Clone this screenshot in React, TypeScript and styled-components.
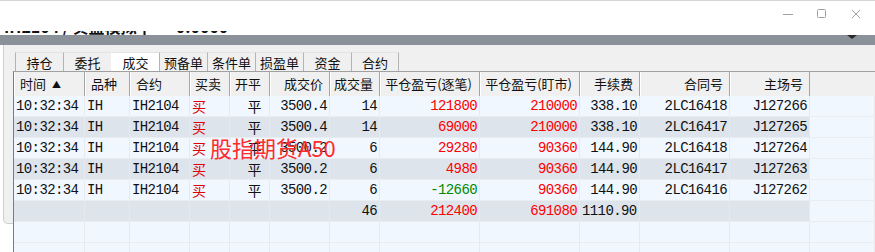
import React from "react";
import styled, { createGlobalStyle } from "styled-components";

const GlobalStyle = createGlobalStyle`
    html, body {
        margin: 0;
        padding: 0;
        background: #ffffff;
        overflow: hidden;
    }
    body {
        font-family: "Noto Sans CJK SC", "Noto Sans", sans-serif;
    }
`;

const Window = styled.div`
    width: 875px;
    height: 252px;
    display: flex;
    flex-direction: column;
    overflow: hidden;
    position: relative;
`;

const TitleBar = styled.div`
    flex-shrink: 0;
    height: 34px;
    border-top: 1px solid #d4d4d4;
    background: #ffffff;
    display: flex;
    flex-direction: column;
`;

const Controls = styled.div`
    height: 30px;
    flex-shrink: 0;
    display: flex;
    justify-content: flex-end;
    align-items: flex-start;
    padding-right: 2px;
`;

const ControlButton = styled.div`
    width: 34px;
    height: 26px;
    display: flex;
    align-items: center;
    justify-content: center;
`;

const ClippedLine = styled.div`
    height: 4px;
    flex-shrink: 0;
    overflow: hidden;
`;

const ClippedText = styled.div`
    margin-top: -14px;
    padding-left: 4px;
    font-size: 16px;
    line-height: 18px;
    color: #111;
    white-space: nowrap;
    font-weight: 700;
`;

const GrayBar = styled.div`
    flex-shrink: 0;
    height: 10px;
    background: #8a9199;
    display: flex;
    justify-content: flex-end;
    padding-right: 18px;
`;

const Body = styled.div`
    flex: 1;
    min-height: 0;
    display: flex;
    overflow: hidden;
`;

const Gutter = styled.div`
    width: 13px;
    background: #ffffff;
    flex-shrink: 0;
`;

const FrameEdge = styled.div`
    margin-left: 3px;
    height: 178px;
    background: #f0f0f0;
    border-left: 1px solid #cfcfcf;
    border-bottom: 1px solid #cfcfcf;
    border-bottom-left-radius: 5px;
`;

const Main = styled.div`
    flex: 1;
    display: flex;
    flex-direction: column;
    background: #f0f0f0;
`;

const TabStrip = styled.div`
    flex-shrink: 0;
    display: flex;
    margin-top: 7px;
    margin-left: 2px;
    height: 19px;
`;

const Tab = styled.div<{ $active?: boolean }>`
    width: 48px;
    height: 19px;
    box-sizing: border-box;
    border-left: 1px solid ${(p) => (p.$active ? "#ffffff" : "#b4b4b4")};
    border-top: 1px solid #e4e4e4;
    background: ${(p) => (p.$active ? "#ffffff" : "#f0f0f0")};
    font-size: 13px;
    line-height: 19px;
    text-align: center;
    color: #111;
    &:last-child {
        border-right: 1px solid #b4b4b4;
    }
`;

const Grid = styled.div`
    flex: 1;
    border-top: 1px solid #a0a0a0;
    border-left: 1px solid #7c7c7c;
    background: #f0f7ff;
    display: flex;
    flex-direction: column;
`;

const cols = "71px 45px 60px 40px 40px 60px 50px 100px 100px 60px 90px 80px 1fr";

const HeaderRow = styled.div`
    flex-shrink: 0;
    display: grid;
    grid-template-columns: ${cols};
    height: 24px;
    background: #f0f0f0;
`;

const HeadCell = styled.div<{ $right?: boolean; $pad: number; $blank?: boolean }>`
    box-sizing: border-box;
    border-right: ${(p) => (p.$blank ? "none" : "1px solid #a5a5a5")};
    box-shadow: ${(p) => (p.$blank ? "none" : "inset 1px 0 0 #ffffff")};
    font-size: 13px;
    line-height: 24px;
    color: #111;
    white-space: nowrap;
    overflow: hidden;
    text-align: ${(p) => (p.$right ? "right" : "left")};
    padding: ${(p) => (p.$right ? `0 ${p.$pad}px 0 0` : `0 0 0 ${p.$pad}px`)};
`;

const SortMark = styled.span`
    font-size: 9px;
    margin-left: 6px;
    position: relative;
    top: -1px;
`;

const DataRow = styled.div`
    flex-shrink: 0;
    display: grid;
    grid-template-columns: ${cols};
    height: 21px;
`;

const Cell = styled.div<{ $dark?: boolean; $align: "left" | "right" | "center"; $color?: string; $cjk?: boolean }>`
    box-sizing: border-box;
    background: ${(p) => (p.$dark ? "#dee4eb" : "#f0f7ff")};
    border-right: 1px solid #e7e9ec;
    border-bottom: 1px solid #e9edf2;
    color: ${(p) => p.$color || "#111"};
    font-family: ${(p) =>
        p.$cjk ? `"Noto Sans CJK SC", sans-serif` : `"Liberation Mono", "Courier New", monospace`};
    font-size: 14px;
    letter-spacing: ${(p) => (p.$cjk ? "0" : "-0.6px")};
    line-height: 21px;
    white-space: nowrap;
    overflow: hidden;
    text-align: ${(p) => p.$align};
    padding: ${(p) =>
        p.$align === "right" ? "0 2px 0 0" : p.$align === "center" ? "0 0 0 10px" : "0 0 0 2px"};
`;

const Watermark = styled.div`
    position: absolute;
    left: 210px;
    top: 132px;
    font-family: "Noto Sans CJK SC", sans-serif;
    font-size: 22px;
    line-height: 30px;
    color: #ff2a2a;
    white-space: nowrap;
    pointer-events: none;
`;

type Align = "left" | "right" | "center";

const headers: { label: string; right?: boolean; pad: number }[] = [
    { label: "时间", pad: 6 },
    { label: "品种", pad: 6 },
    { label: "合约", pad: 6 },
    { label: "买卖", pad: 5 },
    { label: "开平", pad: 5 },
    { label: "成交价", right: true, pad: 6 },
    { label: "成交量", right: true, pad: 6 },
    { label: "平仓盈亏(逐笔)", right: true, pad: 7 },
    { label: "平仓盈亏(盯市)", right: true, pad: 7 },
    { label: "手续费", right: true, pad: 6 },
    { label: "合同号", right: true, pad: 6 },
    { label: "主场号", right: true, pad: 6 },
];

const aligns: Align[] = [
    "left", "left", "left", "left", "center", "right", "right",
    "right", "right", "right", "right", "right",
];

const trades = [
    ["10:32:34", "IH", "IH2104", "买", "平", "3500.4", "14", "121800", "210000", "338.10", "2LC16418", "J127266"],
    ["10:32:34", "IH", "IH2104", "买", "平", "3500.4", "14", "69000", "210000", "338.10", "2LC16417", "J127265"],
    ["10:32:34", "IH", "IH2104", "买", "平", "3500.2", "6", "29280", "90360", "144.90", "2LC16418", "J127264"],
    ["10:32:34", "IH", "IH2104", "买", "平", "3500.2", "6", "4980", "90360", "144.90", "2LC16417", "J127263"],
    ["10:32:34", "IH", "IH2104", "买", "平", "3500.2", "6", "-12660", "90360", "144.90", "2LC16416", "J127262"],
];

const totals = ["", "", "", "", "", "", "46", "212400", "691080", "1110.90", "", ""];

function colorFor(col: number, value: string) {
    if (col === 3) return "#e00000";
    if (col === 7) return value.startsWith("-") ? "#008a00" : "#ff0000";
    if (col === 8) return "#ff0000";
    return undefined;
}

const tabs = ["持仓", "委托", "成交", "预备单", "条件单", "损盈单", "资金", "合约"];

export default function App() {
    return (
        <Window>
            <GlobalStyle />
            <TitleBar>
                <Controls>
                    <ControlButton>
                        <svg width="12" height="12" viewBox="0 0 12 12">
                            <line x1="1" y1="6.5" x2="11" y2="6.5" stroke="#a0a0a0" strokeWidth="1" />
                        </svg>
                    </ControlButton>
                    <ControlButton>
                        <svg width="12" height="12" viewBox="0 0 12 12">
                            <rect x="1.5" y="1.5" width="8" height="8" rx="1" fill="none" stroke="#a0a0a0" strokeWidth="1" />
                        </svg>
                    </ControlButton>
                    <ControlButton>
                        <svg width="12" height="12" viewBox="0 0 12 12">
                            <path d="M2 2 L10 10 M10 2 L2 10" stroke="#a0a0a0" strokeWidth="1" />
                        </svg>
                    </ControlButton>
                </Controls>
                <ClippedLine>
                    <ClippedText>IH2104 / 实盘模拟中 · 0.0000</ClippedText>
                </ClippedLine>
            </TitleBar>
            <GrayBar>
                <svg width="10" height="4" viewBox="0 0 10 4">
                    <path d="M0 0 H10 L5 4 Z" fill="#2a2a2a" />
                </svg>
            </GrayBar>
            <Body>
                <Gutter>
                    <FrameEdge />
                </Gutter>
                <Main>
                    <TabStrip>
                        {tabs.map((t) => (
                            <Tab key={t} $active={t === "成交"}>{t}</Tab>
                        ))}
                    </TabStrip>
                    <Grid>
                        <HeaderRow>
                            {headers.map((h, i) => (
                                <HeadCell key={h.label} $right={h.right} $pad={h.pad}>
                                    {h.label}
                                    {i === 0 && <SortMark>▲</SortMark>}
                                </HeadCell>
                            ))}
                            <HeadCell $pad={0} $blank />
                        </HeaderRow>
                        {trades.map((row, r) => (
                            <DataRow key={r}>
                                {row.map((v, c) => (
                                    <Cell
                                        key={c}
                                        $dark={r % 2 === 1}
                                        $align={aligns[c]}
                                        $color={colorFor(c, v)}
                                        $cjk={c === 3 || c === 4}
                                    >
                                        {v}
                                    </Cell>
                                ))}
                                <Cell $align="left" />
                            </DataRow>
                        ))}
                        <DataRow>
                            {totals.map((v, c) => (
                                <Cell key={c} $dark $align={c === 9 ? "left" : "right"} $color={colorFor(c, v)}>
                                    {v}
                                </Cell>
                            ))}
                            <Cell $align="left" />
                        </DataRow>
                        {[0, 1].map((r) => (
                            <DataRow key={`e${r}`}>
                                {Array.from({ length: 13 }).map((_, c) => (
                                    <Cell key={c} $align="left" />
                                ))}
                            </DataRow>
                        ))}
                    </Grid>
                </Main>
            </Body>
            <Watermark>股指期货A50</Watermark>
        </Window>
    );
}
